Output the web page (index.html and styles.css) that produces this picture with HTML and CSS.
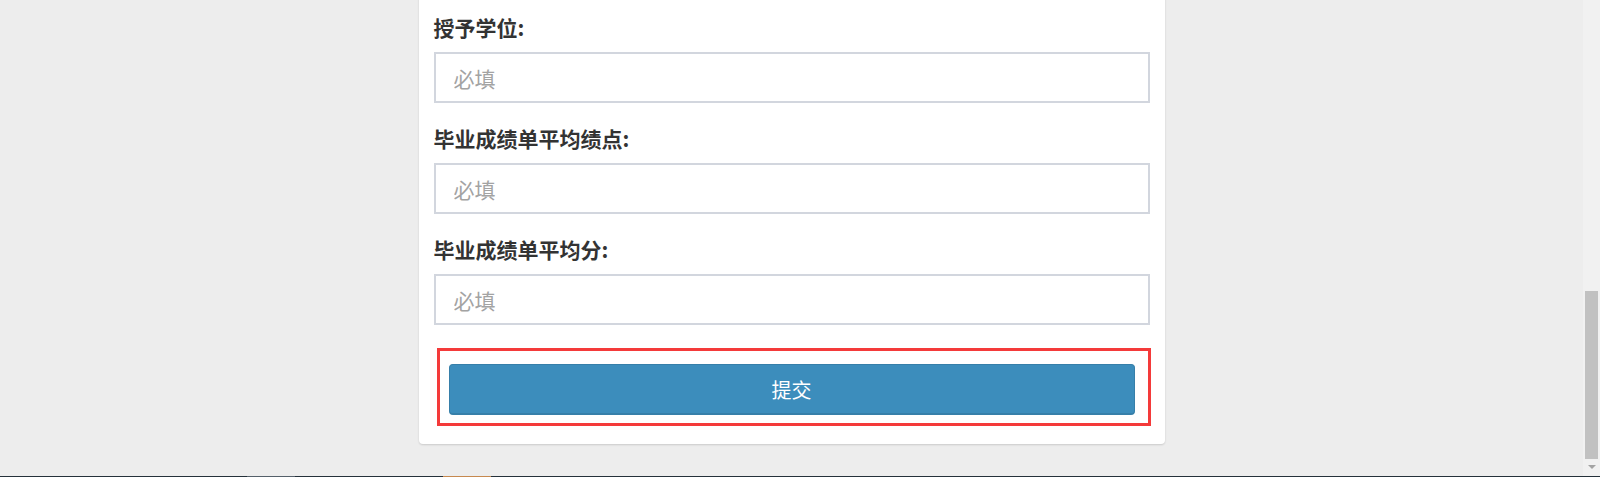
FILE: index.html
```html
<!DOCTYPE html>
<html lang="zh-CN">
<head>
    <meta charset="UTF-8">
    <meta name="viewport" content="width=device-width, initial-scale=1.0">
    <title>学历信息</title>
    <link rel="stylesheet" href="styles.css">
</head>
<body>
    <div class="screen">
        <div class="viewport">
            <div class="page">
                <form class="box">
                    <div class="box-body">
                        <div class="form-group">
                            <label for="degree">授予学位:</label>
                            <input id="degree" class="form-control" type="text" placeholder="必填">
                        </div>
                        <div class="form-group">
                            <label for="gpa">毕业成绩单平均绩点:</label>
                            <input id="gpa" class="form-control" type="text" placeholder="必填">
                        </div>
                        <div class="form-group">
                            <label for="score">毕业成绩单平均分:</label>
                            <input id="score" class="form-control" type="text" placeholder="必填">
                        </div>
                    </div>
                    <div class="box-footer">
                        <div class="btn-wrap">
                            <span class="mark"></span>
                            <button type="button" class="btn-primary">提交</button>
                        </div>
                    </div>
                </form>
            </div>
            <div class="scrollbar">
                <div class="scroll-thumb"></div>
                <div class="scroll-down"><span class="arrow"></span></div>
            </div>
        </div>
        <div class="taskbar">
            <span class="seg seg-a"></span>
            <span class="seg seg-b"></span>
            <span class="seg seg-a2"></span>
            <span class="seg seg-c"></span>
            <span class="seg seg-rest"></span>
        </div>
    </div>
</body>
</html>
```

FILE: styles.css
```css
body {
    margin: 0;
    background: #ededed;
    font-family: "Noto Sans CJK SC", "Noto Sans", sans-serif;
    color: #333;
    overflow: hidden;
}
.screen {
    display: flex;
    flex-direction: column;
    height: 477px;
}
.viewport {
    display: flex;
    height: 476px;
}
.page {
    flex: 1;
    overflow: hidden;
}

/* form box */
.box {
    width: 746px;
    margin: -16px auto 0;
    background: #fff;
    border-radius: 4px;
    box-shadow: 0 1px 2px rgba(0,0,0,0.15);
}
.box-body {
    padding: 30px 15px 0;
}
.form-group {
    margin-bottom: 22px;
}
.form-group label {
    display: block;
    height: 26px;
    line-height: 26px;
    margin-bottom: 12px;
    font-size: 21px;
    font-weight: 700;
    color: #333;
}
.form-control {
    display: block;
    box-sizing: border-box;
    width: 100%;
    height: 51px;
    padding: 0 18px;
    border: 2px solid #d2d6de;
    border-radius: 0;
    background: #fff;
    font-family: inherit;
    font-size: 21px;
    color: #555;
    outline: none;
}
.form-control::placeholder {
    color: #a3a3a3;
}
.box-footer {
    padding: 17px 30px 29px;
}
.btn-wrap {
    position: relative;
}
.btn-primary {
    display: block;
    box-sizing: border-box;
    width: 100%;
    height: 51px;
    background: #3c8dbc;
    border: 1px solid #367fa9;
    border-bottom-width: 2px;
    border-radius: 4px;
    color: #fff;
    font-family: inherit;
    font-size: 20px;
    cursor: pointer;
}
.mark {
    position: absolute;
    top: -16px;
    left: -12px;
    right: -16px;
    bottom: -11px;
    border: 3px solid #f43a3a;
    pointer-events: none;
}

/* scrollbar */
.scrollbar {
    width: 17px;
    background: #f1f1f1;
    display: flex;
    flex-direction: column;
    justify-content: flex-end;
}
.scroll-thumb {
    height: 168px;
    margin: 0 2px;
    background: #c1c1c1;
}
.scroll-down {
    height: 17px;
    display: flex;
    justify-content: center;
    padding-top: 6px;
    box-sizing: border-box;
}
.arrow {
    width: 0;
    height: 0;
    border-left: 4px solid transparent;
    border-right: 4px solid transparent;
    border-top: 4px solid #a3a3a3;
}

/* bottom strip */
.taskbar {
    display: flex;
    height: 1px;
}
.seg { display: block; height: 1px; }
.seg-a { width: 247px; background: #25313a; }
.seg-b { width: 48px; background: #55606a; }
.seg-a2 { width: 148px; background: #25313a; }
.seg-c { width: 48px; background: #c6894f; }
.seg-rest { flex: 1; background: #25313a; }
```
